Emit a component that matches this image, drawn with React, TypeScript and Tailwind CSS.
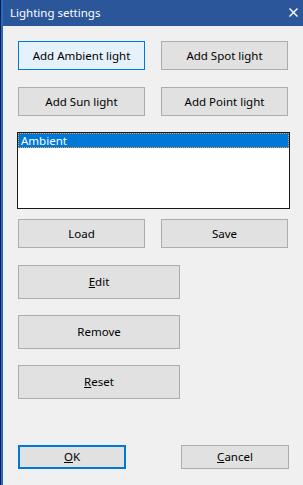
import React from "react";

const font = { fontFamily: '"Noto Sans", "Open Sans", sans-serif' };

function Btn({
  children,
  w,
  h,
  variant = "normal",
}: {
  children: React.ReactNode;
  w: string;
  h: string;
  variant?: "normal" | "hover" | "default";
}) {
  const base = "flex items-center justify-center text-[11.5px] text-black leading-none box-border";
  const v =
    variant === "hover"
      ? "bg-[#e5f1fb] border border-[#0078d7]"
      : variant === "default"
      ? "bg-[#e1e1e1] border-2 border-[#0078d7]"
      : "bg-[#e1e1e1] border border-[#adadad]";
  return <div className={`${base} ${v} ${w} ${h}`}>{children}</div>;
}

export default function App() {
  return (
    <div className="flex w-[303px] h-[485px] bg-[#f0f0f0]" style={font}>
      <div className="w-[1px] h-full bg-[#0a1a33]" />
      <div className="w-[2px] h-full bg-[#1c6fd1]" />
      <div className="flex flex-col flex-1">
        <div className="h-[26px] bg-[#2b579a] flex items-center justify-between pl-[7px] pr-[5px]">
          <span className="text-white text-[11.5px] leading-none">Lighting settings</span>
          <svg width="9" height="9" viewBox="0 0 9 9" className="mb-[2px]">
            <path d="M0.5 0.5 L8.5 8.5 M8.5 0.5 L0.5 8.5" stroke="white" strokeWidth="1.4" />
          </svg>
        </div>
        <div className="flex flex-col pl-[15px] pt-[15px]">
          <div className="flex gap-[16px]">
            <Btn w="w-[127px]" h="h-[29px]" variant="hover">Add Ambient light</Btn>
            <Btn w="w-[127px]" h="h-[29px]">Add Spot light</Btn>
          </div>
          <div className="flex gap-[16px] mt-[17px]">
            <Btn w="w-[127px]" h="h-[29px]">Add Sun light</Btn>
            <Btn w="w-[127px]" h="h-[29px]">Add Point light</Btn>
          </div>
          <div className="ml-[-1px] mt-[16px] w-[273px] h-[77px] bg-white border border-[#1a1a1a] box-border">
            <div className="h-[15px] bg-[#0078d7] border border-dotted border-[#f7a13c] flex items-center pl-[2px] box-border">
              <span className="text-white text-[11.5px] leading-none">Ambient</span>
            </div>
          </div>
          <div className="flex gap-[16px] mt-[10px]">
            <Btn w="w-[127px]" h="h-[29px]">Load</Btn>
            <Btn w="w-[127px]" h="h-[29px]">Save</Btn>
          </div>
          <div className="mt-[17px]">
            <Btn w="w-[162px]" h="h-[34px]">
              <span><span className="underline underline-offset-1">E</span>dit</span>
            </Btn>
          </div>
          <div className="mt-[16px]">
            <Btn w="w-[162px]" h="h-[34px]">Remove</Btn>
          </div>
          <div className="mt-[16px]">
            <Btn w="w-[162px]" h="h-[34px]">
              <span><span className="underline underline-offset-1">R</span>eset</span>
            </Btn>
          </div>
          <div className="flex mt-[46px] gap-[55px]">
            <Btn w="w-[108px]" h="h-[24px]" variant="default">
              <span><span className="underline underline-offset-1">O</span>K</span>
            </Btn>
            <Btn w="w-[108px]" h="h-[24px]">
              <span><span className="underline underline-offset-1">C</span>ancel</span>
            </Btn>
          </div>
        </div>
      </div>
    </div>
  );
}
